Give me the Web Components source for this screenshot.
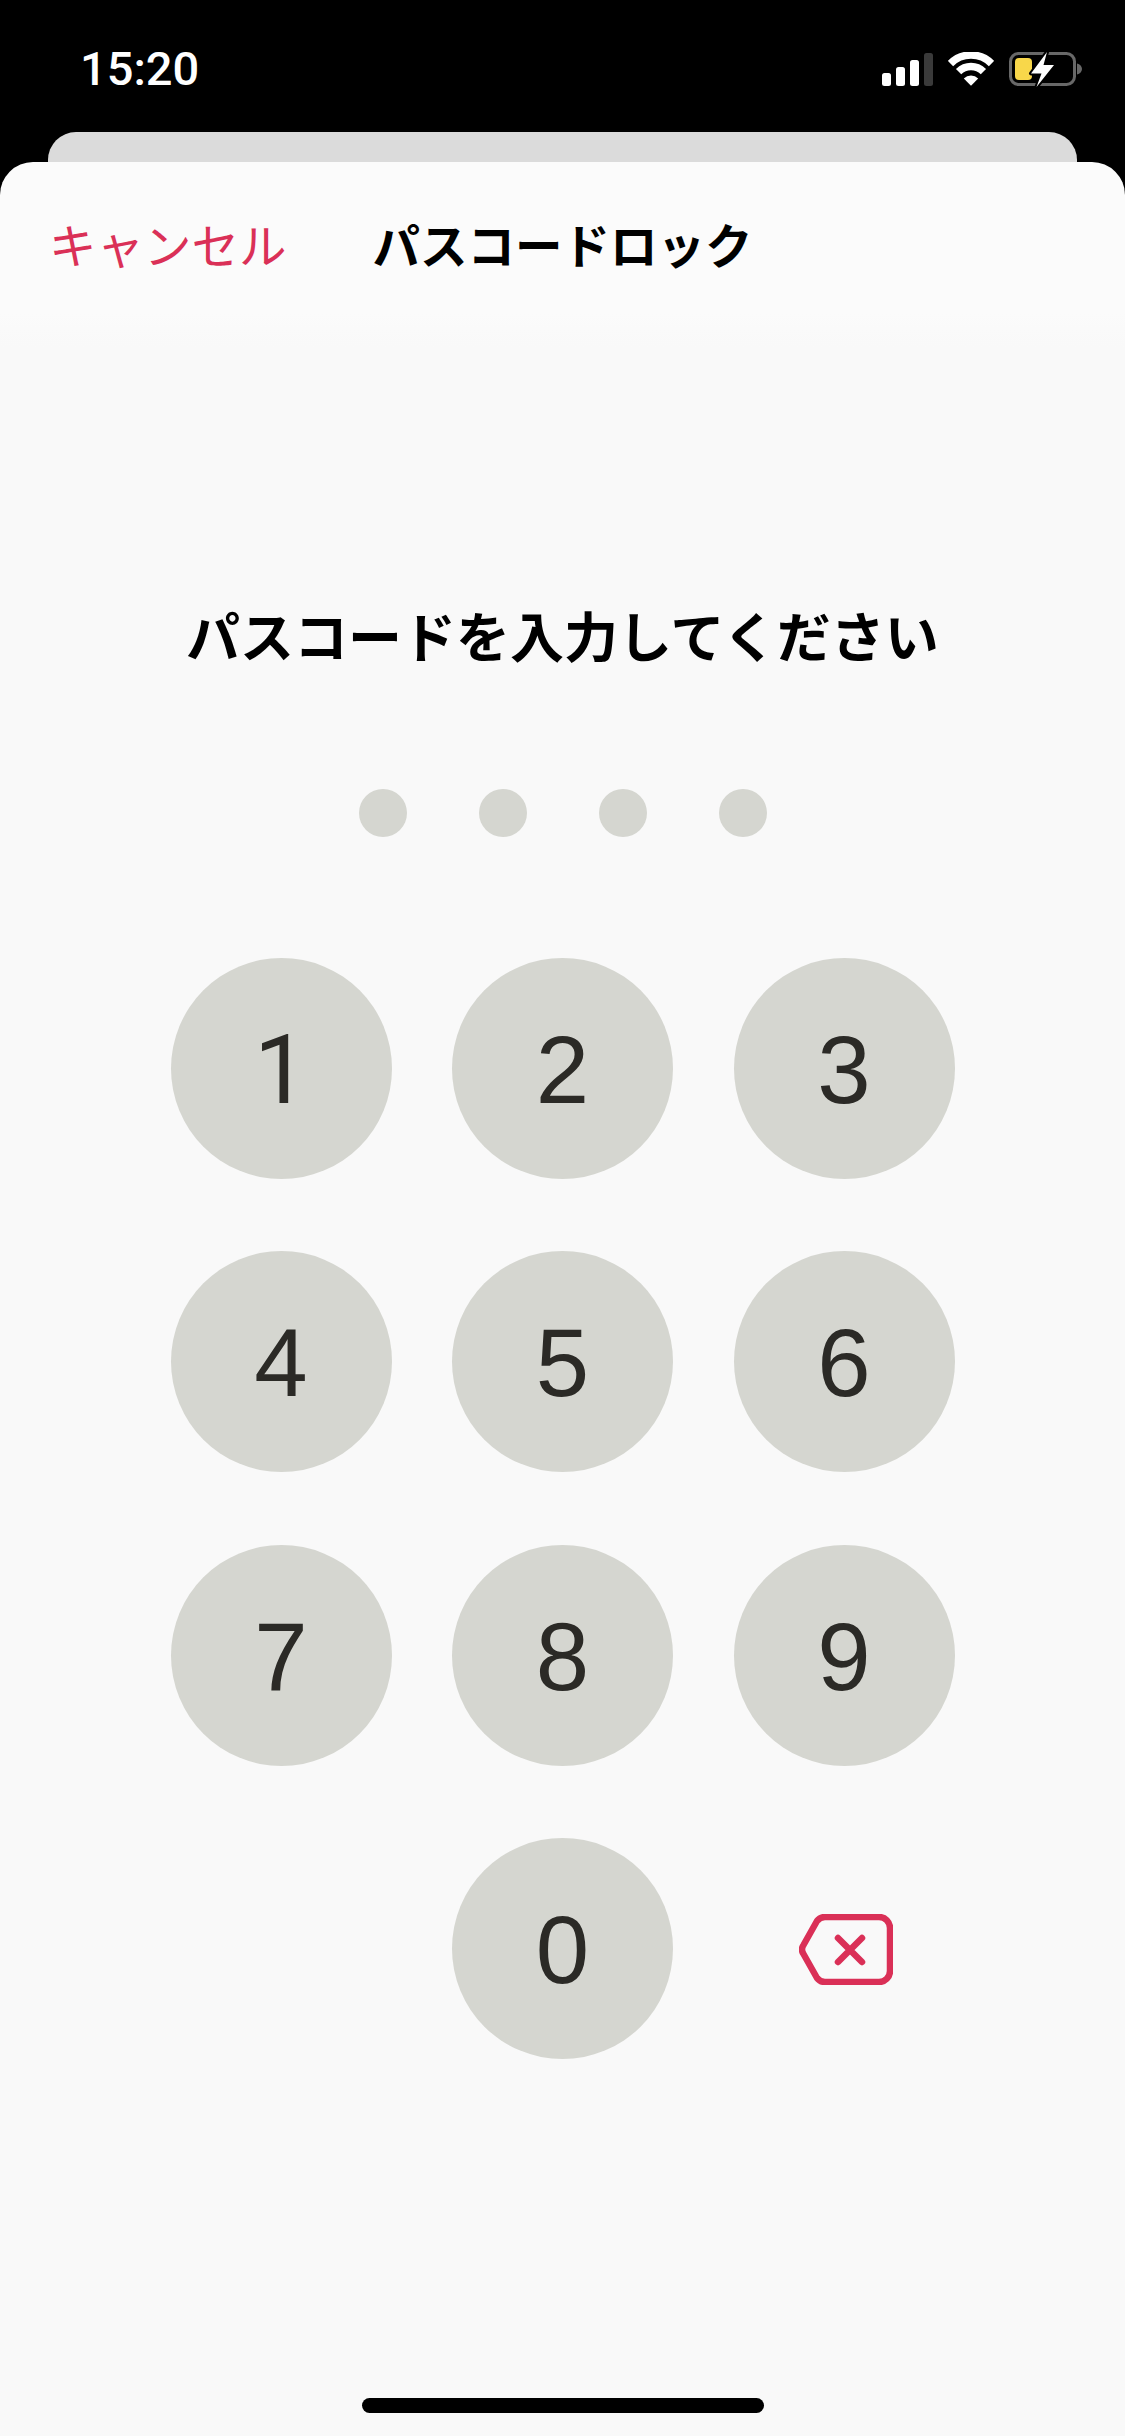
<!DOCTYPE html>
<html lang="ja"><head><meta charset="utf-8"><title>パスコードロック</title>
<style>
html,body{margin:0;padding:0;background:#000;height:2436px;overflow:hidden}
</style></head>
<body>
<lock-screen></lock-screen>
<script>
const JP='"Noto Sans CJK JP","Noto Sans",sans-serif';
function def(name,html){
  customElements.define(name,class extends HTMLElement{
    constructor(){super();const r=this.attachShadow({mode:'open'});r.innerHTML=html;}
  });
}
def('status-bar',`<style>
:host{display:flex;box-sizing:border-box;height:132px;padding:52px 42px 0 80px;justify-content:space-between;align-items:flex-start;background:#000;color:#fff}
.t{font:500 47px/34px Roboto,"Liberation Sans",sans-serif}
.i{display:flex;gap:15px;align-items:flex-start}
svg{display:block}
</style>
<span class="t">15:20</span>
<span class="i">
<svg width="51" height="34" viewBox="0 0 51 34"><g fill="#fff"><rect x="0" y="21" width="9" height="13" rx="2.500"/><rect x="14" y="15" width="9" height="19" rx="2.500"/><rect x="28" y="8" width="9" height="26" rx="2.500"/></g><rect x="42" y="1" width="9" height="33" rx="2.500" fill="#3a3a3a"/></svg>
<svg width="46" height="34" viewBox="0 0 46 34" fill="none"><g stroke="#fff" stroke-width="7.500"><path d="M2.500 11.500a29 29 0 0 1 41 0"/><path d="M10.600 19.600a17.600 17.600 0 0 1 24.800 0"/></g><path d="M23 33.800 15.800 26.600a10.200 10.200 0 0 1 14.400 0Z" fill="#fff"/></svg>
<svg width="74" height="36" viewBox="0 0 74 36"><rect x="1.500" y="1.500" width="64" height="31" rx="8" fill="none" stroke="#686868" stroke-width="3"/><path d="M68 11.500c3 .8 5 3 5 5.500s-2 4.700-5 5.500z" fill="#686868"/><rect x="6" y="6" width="17" height="22" rx="4" fill="#f8d74a"/><path d="M38 0 22 21.500h10.500L27.500 35 45 13H34.500Z" fill="#fff" stroke="#000" stroke-width="4" paint-order="stroke" stroke-linejoin="round"/></svg>
</span>`);
def('sheet-nav',`<style>
:host{display:grid;grid-template-columns:1fr auto 1fr;align-items:center;height:162px;padding:0 49px;box-sizing:border-box;font-family:${JP}}
.c{color:#da3057;font-size:47.500px;font-weight:400;white-space:nowrap}
.h{color:#000;font-size:47.500px;font-weight:700;white-space:nowrap}
</style><span class="c">キャンセル</span><span class="h">パスコードロック</span><span></span>`);
def('passcode-dots',`<style>
:host{display:flex;justify-content:center;gap:72px;margin-top:114px}
i{width:48px;height:48px;border-radius:50%;background:#d5d6d0}
</style><i></i><i></i><i></i><i></i>`);
def('key-button',`<style>
:host{display:flex;align-items:center;justify-content:center;box-sizing:border-box;padding-top:3px;width:221px;height:221px;border-radius:50%;background:#d5d6d0;color:#2b2a26;font:400 96px/1 "Liberation Sans",sans-serif}
:host([flag]){font-family:Roboto,"Liberation Sans",sans-serif;padding-top:4px}
</style><slot></slot>`);
def('delete-key',`<style>
:host{display:flex;align-items:center;justify-content:center;box-sizing:border-box;width:221px;height:221px;padding:2px 0 0 3px}
svg{display:block}
</style><svg width="94" height="71" viewBox="0 0 94 71" fill="none" stroke="#da3057" stroke-width="6.500" stroke-linecap="round" stroke-linejoin="round"><path d="M26 3H80a11 11 0 0 1 11 11V57a11 11 0 0 1-11 11H26a10 10 0 0 1-8-4L4.500 40a8 8 0 0 1 0-9L18 7a10 10 0 0 1 8-4Z"/><path d="M39 24 63 48M63 24 39 48"/></svg>`);
def('key-pad',`<style>
:host{display:grid;grid-template-columns:repeat(3,221px);grid-auto-rows:221px;column-gap:60.500px;row-gap:72.500px;justify-content:center;margin-top:120.500px}
</style><slot></slot>`);
def('home-indicator',`<style>
:host{display:block;width:402px;height:15px;border-radius:8px;background:#000;margin:auto auto 23px}
</style>`);
def('lock-screen',`<style>
:host{display:flex;flex-direction:column;height:2436px;background:#000;overflow:hidden}
.back{height:30px;margin:0 48px;background:#dbdbdb;border-radius:28px 28px 0 0;flex:none}
.sheet{flex:1;display:flex;flex-direction:column;background:linear-gradient(#fbfbfb 0,#fbfbfb 150px,#f9f9f9 185px);border-radius:33px 33px 0 0}
h1{margin:271px 0 0;text-align:center;font:700 54px/80px ${JP};color:#000}
.blank{width:221px;height:221px}
</style>
<status-bar></status-bar>
<div class="back"></div>
<div class="sheet">
<sheet-nav></sheet-nav>
<h1>パスコードを入力してください</h1>
<passcode-dots></passcode-dots>
<key-pad>
<key-button flag>1</key-button><key-button>2</key-button><key-button>3</key-button>
<key-button>4</key-button><key-button>5</key-button><key-button>6</key-button>
<key-button>7</key-button><key-button>8</key-button><key-button>9</key-button>
<div class="blank"></div><key-button>0</key-button><delete-key></delete-key>
</key-pad>
<home-indicator></home-indicator>
</div>`);
</script>
</body></html>
